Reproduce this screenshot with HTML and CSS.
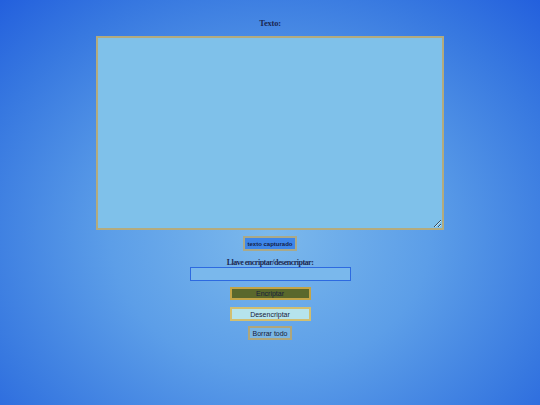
FILE: index.html
```html
<!DOCTYPE html>
<html lang="es">
<head>
<meta charset="utf-8">
<title>Encriptar</title>
<link rel="stylesheet" href="styles.css">
</head>
<body>
<main class="page">
  <label class="title" for="texto">Texto:</label>
  <textarea id="texto" class="text-area"></textarea>
  <button class="btn btn-capture">texto capturado</button>
  <label class="key-label" for="llave">Llave encriptar/desencriptar:</label>
  <input id="llave" class="key-input" type="text">
  <button class="btn btn-encrypt">Encriptar</button>
  <button class="btn btn-decrypt">Desencriptar</button>
  <button class="btn btn-clear">Borrar todo</button>
</main>
</body>
</html>
```
FILE: styles.css
```css
html, body {
  margin: 0;
  height: 100%;
}
body {
  background: radial-gradient(ellipse 78% 88% at 50% 58%, #7cb9ec 0%, #5c9ee8 38%, #3778e0 72%, #1b56dc 100%);
  font-family: "Liberation Sans", Arial, sans-serif;
}
.page {
  display: flex;
  flex-direction: column;
  align-items: center;
  padding-top: 18px;
}
.title {
  font-family: "Liberation Serif", "Times New Roman", serif;
  font-weight: bold;
  font-size: 8.5px;
  letter-spacing: -0.2px;
  color: #1b2852;
  line-height: 11px;
}
.text-area {
  box-sizing: border-box;
  width: 348px;
  height: 194px;
  margin-top: 7px;
  background: #7fc1ea;
  border: 2px solid #b3ab7e;
  padding: 2px;
  font-family: "Liberation Sans", Arial, sans-serif;
  font-size: 8px;
  outline: none;
}
.btn {
  box-sizing: border-box;
  font-family: "Liberation Sans", Arial, sans-serif;
  font-size: 7px;
  color: #16203a;
  padding: 0;
  cursor: pointer;
}
.btn-capture {
  width: 54px;
  height: 15px;
  margin-top: 6px;
  background: #3e86ea;
  border: 2px solid #a9a98a;
  font-weight: bold;
  font-size: 6px;
  color: #13224a;
}
.key-label {
  margin-top: 7px;
  font-family: "Liberation Serif", "Times New Roman", serif;
  font-weight: bold;
  font-size: 8px;
  letter-spacing: -0.5px;
  line-height: 9px;
  color: #1b2852;
}
.key-input {
  box-sizing: border-box;
  width: 161px;
  height: 14px;
  margin-top: 0;
  background: #7ab8ec;
  border: 1.5px solid #2d6ae0;
  padding: 0 3px;
  outline: none;
}
.btn-encrypt {
  width: 81px;
  height: 13px;
  margin-top: 6px;
  background: #5a682c;
  border: 2px solid #c3a447;
}
.btn-decrypt {
  width: 81px;
  height: 14px;
  margin-top: 7px;
  background: #b6e4ec;
  border: 2px solid #d2bf70;
}
.btn-clear {
  width: 44px;
  height: 14px;
  margin-top: 5px;
  background: #7ab6e4;
  border: 2px solid #aea67c;
}
```
